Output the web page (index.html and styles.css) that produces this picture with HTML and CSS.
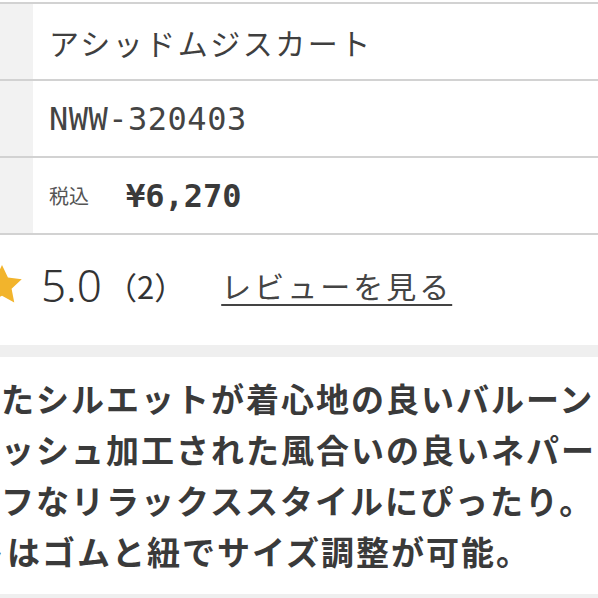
FILE: index.html
```html
<!DOCTYPE html>
<html lang="ja">
<head>
    <meta charset="UTF-8">
    <meta name="viewport" content="width=device-width, initial-scale=1.0">
    <title>アシッドムジスカート</title>
    <link rel="stylesheet" href="styles.css">
</head>
<body>
    <!-- 商品スペック -->
    <div class="spec">
        <div class="row">
            <div class="label"></div>
            <div class="value name">アシッドムジスカート</div>
        </div>
        <div class="row">
            <div class="label"></div>
            <div class="value code">NWW-320403</div>
        </div>
        <div class="row">
            <div class="label"></div>
            <div class="value">
                <span class="tax">税込</span>
                <span class="price">¥6,270</span>
            </div>
        </div>
    </div>

    <!-- 評価 -->
    <div class="rating">
        <svg class="star" viewBox="0 0 24 24" width="46" height="46">
            <path d="M12 1.5l3.1 6.6 7.2.9-5.3 5 1.4 7.1L12 17.6l-6.4 3.5L7 14l-5.3-5 7.2-.9z" fill="#f2b42c"/>
        </svg>
        <span class="score">5.0</span>
        <span class="count">（2）</span>
        <a href="#" class="reviews">レビューを見る</a>
    </div>

    <!-- 商品説明 -->
    <div class="desc">
        <div class="line">したシルエットが着心地の良いバルーン</div>
        <div class="line">ォッシュ加工された風合いの良いネパー</div>
        <div class="line">ラフなリラックススタイルにぴったり。</div>
        <div class="line shift">トはゴムと紐でサイズ調整が可能。</div>
    </div>
</body>
</html>
```

FILE: styles.css
```css
body {
    margin: 0;
    width: 598px;
    height: 598px;
    overflow: hidden;
    background-color: #fff;
    color: #444;
    font-family: "Noto Sans CJK JP", "Noto Sans", sans-serif;
}
.spec {
    margin-top: 2px;
    border-top: 2px solid #d2d2d2;
}
.row {
    display: flex;
    height: 75px;
    border-bottom: 2px solid #d2d2d2;
}
.label {
    width: 33px;
    background-color: #f2f2f2;
}
.value {
    display: flex;
    align-items: center;
    padding-left: 16px;
}
.name {
    font-size: 30px;
    letter-spacing: 2.5px;
    color: #3f3f3f;
}
.code {
    font-family: "DejaVu Sans Mono", monospace;
    font-size: 32px;
    letter-spacing: 0.5px;
}
.tax {
    font-size: 20px;
    color: #555;
    margin-right: 37px;
}
.price {
    font-family: "DejaVu Sans Mono", monospace;
    font-size: 32px;
    font-weight: bold;
    color: #3a3a3a;
}
.rating {
    display: flex;
    align-items: center;
    height: 110px;
    padding-bottom: 10px;
    box-sizing: border-box;
}
.star {
    margin-left: -21px;
    margin-right: 16px;
}
.score {
    font-family: "Noto Sans", sans-serif;
    font-size: 44px;
    font-weight: 300;
    color: #333;
}
.count {
    font-size: 31px;
    color: #333;
    margin-left: 4px;
    margin-right: 36px;
}
.reviews {
    font-size: 30px;
    letter-spacing: 3px;
    color: #444;
    text-decoration: underline;
    text-underline-offset: 6px;
    text-decoration-thickness: 2px;
}
.desc {
    border-top: 12px solid #efefef;
    border-bottom: 6px solid #efefef;
    padding: 16px 0 17px;
    overflow: hidden;
    font-size: 33px;
    font-weight: bold;
    line-height: 51px;
    letter-spacing: 2px;
    color: #3a3a3a;
}
.line {
    white-space: nowrap;
    margin-left: -34px;
}
.line.shift {
    margin-left: -28px;
}
```
